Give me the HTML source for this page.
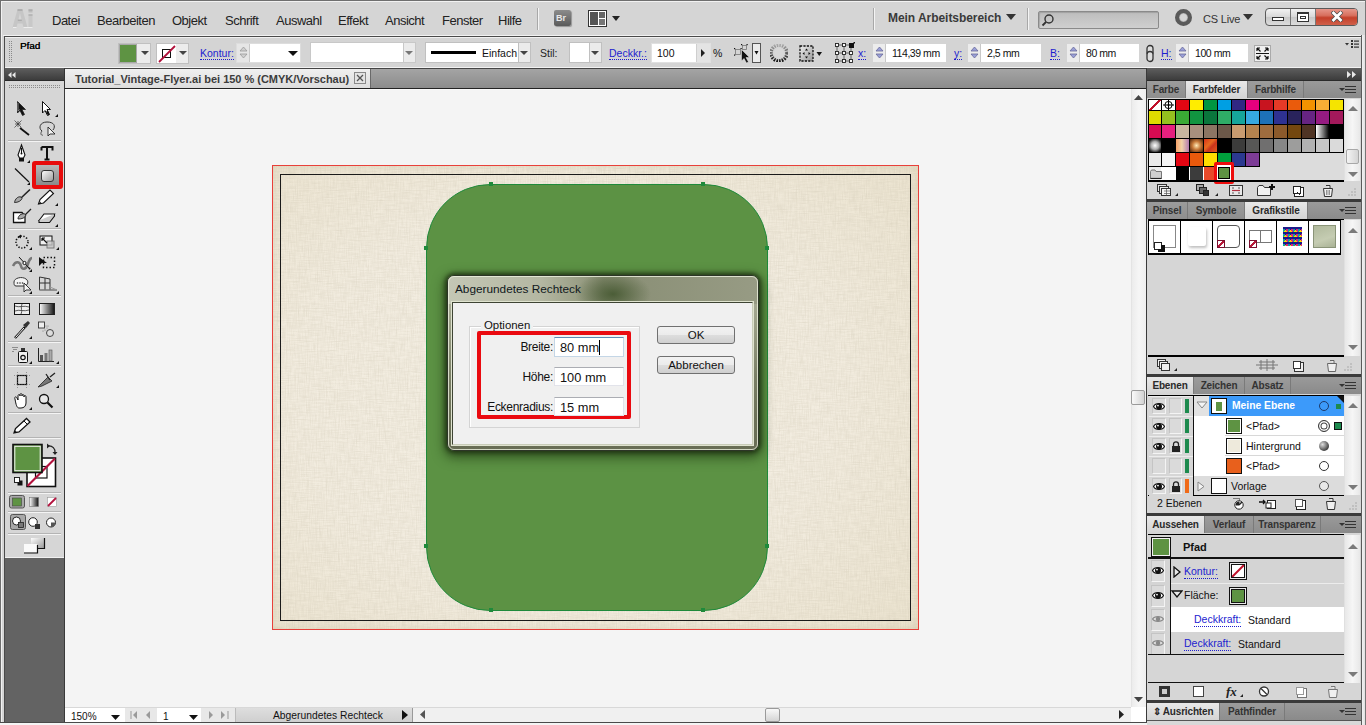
<!DOCTYPE html>
<html><head><meta charset="utf-8">
<style>
*{box-sizing:border-box}
html,body{margin:0;padding:0}
body{width:1366px;height:725px;position:relative;overflow:hidden;background:#d5d5d5;font-family:"Liberation Sans",sans-serif;color:#111}
.a{position:absolute}
.menu span{position:absolute;top:14px;font-size:13px;line-height:14px;color:#222;letter-spacing:-0.5px}
.hdr{background:linear-gradient(#5e5e5e,#3c3c3c);border-bottom:1px solid #2a2a2a}
.tab{position:absolute;top:0;height:17px;font-size:10px;font-weight:bold;color:#333;text-align:center;line-height:18px;white-space:nowrap;letter-spacing:-0.15px;background:linear-gradient(#9c9c9c,#8e8e8e);border-right:1px solid #7a7a7a}
.tab.on{background:linear-gradient(#e8e8e8,#d4d4d4);color:#2a2a2a}
.tabrow{background:linear-gradient(#9a9a9a,#8a8a8a)}
.inp{position:absolute;background:#fff;border:1px solid #b8b8b8}
.lbl{position:absolute;font-size:11px;color:#222}
.blue{color:#1d1dcf;border-bottom:1px dotted #1d1dcf;line-height:11px}
.sb{background:linear-gradient(90deg,#e8e8e8,#f6f6f6 50%,#e8e8e8);border-left:1px solid #e0e0e0}
.arrU{position:absolute;width:0;height:0;border-left:5px solid transparent;border-right:5px solid transparent;border-bottom:5px solid #7a7a7a}
.arrD{position:absolute;width:0;height:0;border-left:5px solid transparent;border-right:5px solid transparent;border-top:5px solid #7a7a7a}
.pm{position:absolute;top:5px;width:18px;height:9px;background:linear-gradient(#333 0 1px,transparent 1px 3px,#333 3px 4px,transparent 4px 6px,#333 6px 7px,transparent 7px) 7px 0/11px 9px no-repeat}
.pm:before{content:"";position:absolute;left:1px;top:2px;border-left:3px solid transparent;border-right:3px solid transparent;border-top:3px solid #333}
</style></head><body>

<!-- window frame -->
<div class="a" style="left:0;top:0;width:1366px;height:1px;background:#6f6f6f"></div>
<div class="a" style="left:0;top:0;width:1px;height:725px;background:#6f6f6f"></div>
<div class="a" style="left:1px;top:1px;width:1365px;height:1px;background:#f2f2f2"></div>
<div class="a" style="left:1px;top:1px;width:1px;height:724px;background:#f2f2f2"></div>

<!-- MENU BAR -->
<div class="menu">
 <svg class="a" style="left:12px;top:8px" width="21" height="20" viewBox="0 0 21 20">
 <path d="M0.5 19.5L5.5 1.5H10.5L15.5 19.5H11.5L10.5 15.5H5.5L4.5 19.5Z M6.3 12H9.7L8 5Z" fill="#c6c6c6" fill-rule="evenodd"/>
 <path d="M5.5 2H10.5" stroke="#a4a4a4" stroke-width="1.4"/><path d="M5.8 12.2H9.8" stroke="#a8a8a8" stroke-width="1.2"/>
 <rect x="16.5" y="6.5" width="4" height="13" fill="#c8c8c8"/><rect x="16.5" y="1.5" width="4" height="3" fill="#bdbdbd"/>
 <path d="M16.5 2H20.5M16.5 7H20.5" stroke="#a4a4a4" stroke-width="1.2"/>
 <path d="M1 19.5H4.5M11.5 19.5H20.5" stroke="#ececec" stroke-width="1"/>
</svg>
 <span style="left:52px">Datei</span>
 <span style="left:97px">Bearbeiten</span>
 <span style="left:172px">Objekt</span>
 <span style="left:225px">Schrift</span>
 <span style="left:276px">Auswahl</span>
 <span style="left:338px">Effekt</span>
 <span style="left:385px">Ansicht</span>
 <span style="left:442px">Fenster</span>
 <span style="left:498px">Hilfe</span>

 <div class="a" style="left:537px;top:8px;width:1px;height:22px;background:#a8a8a8;box-shadow:1px 0 0 #f4f4f4"></div>
 <div class="a" style="left:554px;top:10px;width:17px;height:16px;border-radius:2px;background:linear-gradient(#8c8c8c,#5a5a5a);box-shadow:1px 1px 1px rgba(0,0,0,.3)"></div>
 <div class="a" style="left:556px;top:13px;font-size:9px;font-weight:bold;line-height:10px;color:#e8e8e8">Br</div>
 <svg class="a" style="left:588px;top:10px" width="34" height="17" viewBox="0 0 34 17"><rect x=".5" y=".5" width="18" height="16" fill="#fff" stroke="#333"/><rect x="2" y="2" width="8" height="13" fill="#555"/><rect x="11" y="2" width="6" height="6" fill="#666"/><rect x="11" y="9" width="6" height="6" fill="#777"/><path d="M24 6H32L28 11Z" fill="#222"/></svg>
 <div class="a" style="left:873px;top:8px;width:1px;height:22px;background:#a8a8a8;box-shadow:1px 0 0 #f4f4f4"></div>
 <div class="a" style="left:888px;top:11px;font-size:12px;font-weight:bold;line-height:14px;color:#3a3a3a;letter-spacing:-0.05px">Mein Arbeitsbereich</div>
 <svg class="a" style="left:1006px;top:14px" width="10" height="7"><path d="M0 0H10L5 6Z" fill="#333"/></svg>
 <div class="a" style="left:1027px;top:8px;width:1px;height:22px;background:#a8a8a8;box-shadow:1px 0 0 #f4f4f4"></div>
 <div class="a" style="left:1038px;top:11px;width:121px;height:18px;border:1px solid #8a8a8a;border-radius:2px;background:linear-gradient(#bdbdbd,#cfcfcf);box-shadow:inset 1px 1px 1px rgba(0,0,0,.15)"></div>
 <svg class="a" style="left:1041px;top:13px" width="14" height="14" viewBox="0 0 14 14"><circle cx="8" cy="6" r="4" fill="none" stroke="#333" stroke-width="1.4"/><path d="M5 9L1.5 12.5" stroke="#333" stroke-width="1.8"/></svg>
 <div class="a" style="left:1175px;top:9px;width:17px;height:17px;border-radius:50%;border:4px solid #5a5a5a;box-shadow:inset 0 0 1px #000"></div>
 <div class="a" style="left:1203px;top:12px;font-size:11px;line-height:14px;color:#333;letter-spacing:-0.2px">CS Live</div>
 <svg class="a" style="left:1243px;top:14px" width="10" height="7"><path d="M0 0H10L5 6Z" fill="#333"/></svg>
 <div class="a" style="left:1265px;top:8px;width:93px;height:18px;border:1px solid #5a5a5a;border-radius:4px;background:linear-gradient(#f2f2f2,#d8d8d8 50%,#c8c8c8 51%,#dcdcdc)"></div>
 <div class="a" style="left:1290px;top:9px;width:1px;height:16px;background:#777"></div>
 <div class="a" style="left:1315px;top:9px;width:1px;height:16px;background:#777"></div>
 <div class="a" style="left:1316px;top:9px;width:41px;height:16px;border-radius:0 3px 3px 0;background:linear-gradient(#e6968a,#d8705e 40%,#c4402a 55%,#d0604a)"></div>
 <div class="a" style="left:1272px;top:17px;width:12px;height:4px;border:1px solid #333;background:#fff"></div>
 <div class="a" style="left:1297px;top:12px;width:12px;height:10px;border:1px solid #333;border-top-width:2px;background:#fff;box-shadow:inset 0 0 0 2px #fff,inset 0 0 0 3px #333"></div>
 <svg class="a" style="left:1331px;top:11px" width="12" height="11" viewBox="0 0 12 11"><path d="M2.5 2L9.5 9M9.5 2L2.5 9" stroke="#4a4a4a" stroke-width="4.2" stroke-linecap="square"/><path d="M2.5 2L9.5 9M9.5 2L2.5 9" stroke="#fff" stroke-width="2.8" stroke-linecap="square"/></svg>
</div>


<!-- CONTROL BAR -->
<div class="a" style="left:3px;top:35px;width:1359px;height:1px;background:#f2f2f2"></div>
<div class="a" style="left:4px;top:36px;width:1358px;height:33px;border-top:1px solid #4a4a4a;border-left:1px solid #4a4a4a;background:#d4d4d4"></div>


<!-- CONTROL BAR CONTENT -->
<div class="a" style="left:5px;top:37px;width:1356px;height:1px;background:#f0f0f0"></div>
<div class="a" style="left:5px;top:67px;width:1356px;height:1px;background:#f2f2f2"></div>
<svg class="a" style="left:9px;top:41px" width="3" height="22"><defs><pattern id="dp2" width="2" height="2" patternUnits="userSpaceOnUse"><rect width="1" height="1" fill="#8a8a8a"/></pattern></defs><rect width="3" height="22" fill="url(#dp2)"/></svg>
<div class="a" style="left:20px;top:39px;font-size:9.8px;line-height:13px;color:#000;text-shadow:0.3px 0 0 #000">Pfad</div>
<!-- fill -->
<div class="a" style="left:118px;top:43px;width:33px;height:21px;background:#ececec;border:1px solid #c0c0c0"></div>
<div class="a" style="left:119px;top:44px;width:18px;height:19px;background:#5e9343;border:1px solid #a8a8a8"></div>
<div class="a arrD" style="left:141px;top:51px;border-left-width:4px;border-right-width:4px;border-top-width:4px;border-top-color:#444"></div>
<!-- stroke -->
<div class="a" style="left:156px;top:43px;width:33px;height:21px;background:#ececec;border:1px solid #c0c0c0"></div>
<div class="a" style="left:157px;top:44px;width:19px;height:19px;background:#fff"></div>
<svg class="a" style="left:157px;top:44px" width="19" height="19"><rect x="5.5" y="5.5" width="8" height="8" fill="none" stroke="#111"/><path d="M2 18L18 2" stroke="#b0103a" stroke-width="1.8"/></svg>
<div class="a arrD" style="left:179px;top:51px;border-left-width:4px;border-right-width:4px;border-top-width:4px;border-top-color:#444"></div>
<div class="a blue" style="left:200px;top:47px;font-size:10.5px;line-height:12px">Kontur:</div>
<div class="inp" style="left:236px;top:43px;width:65px;height:20px;border-color:#ddd"></div>
<div class="a" style="left:237px;top:44px;width:13px;height:18px;background:#e6e6e6;border-right:1px solid #c8c8c8"></div>
<svg class="a" style="left:239px;top:46px" width="9" height="14"><path d="M1 5L4.5 1L8 5Z M1 8L4.5 12L8 8Z" fill="#d0d0d0" stroke="#9a9a9a" stroke-width=".8"/></svg>
<div class="a arrD" style="left:288px;top:51px;border-left-width:5px;border-right-width:5px;border-top-width:5px;border-top-color:#111"></div>
<!-- profile -->
<div class="inp" style="left:310px;top:42px;width:106px;height:21px;border-color:#c8c8c8"></div>
<div class="a" style="left:403px;top:43px;width:12px;height:19px;background:#ebebeb;border-left:1px solid #c8c8c8"></div>
<div class="a arrD" style="left:405px;top:51px;border-left-width:4px;border-right-width:4px;border-top-width:4px;border-top-color:#777"></div>
<!-- brush -->
<div class="inp" style="left:425px;top:42px;width:106px;height:21px;border-color:#c0c0c0"></div>
<div class="a" style="left:431px;top:51px;width:45px;height:3px;background:#000"></div>
<div class="a" style="left:482px;top:47px;font-size:10.5px;line-height:12px;color:#111">Einfach</div>
<div class="a" style="left:518px;top:43px;width:12px;height:19px;background:#ebebeb;border-left:1px solid #c0c0c0"></div>
<div class="a arrD" style="left:520px;top:51px;border-left-width:4px;border-right-width:4px;border-top-width:4px;border-top-color:#444"></div>
<div class="a" style="left:540px;top:47px;font-size:10.5px;line-height:12px;color:#222">Stil:</div>
<div class="inp" style="left:569px;top:42px;width:33px;height:21px;border-color:#c0c0c0"></div>
<div class="a" style="left:589px;top:43px;width:12px;height:19px;background:#ebebeb;border-left:1px solid #c0c0c0"></div>
<div class="a arrD" style="left:591px;top:51px;border-left-width:4px;border-right-width:4px;border-top-width:4px;border-top-color:#444"></div>
<div class="a blue" style="left:609px;top:47px;font-size:10.5px;line-height:12px">Deckkr.:</div>
<div class="inp" style="left:651px;top:43px;width:60px;height:20px;border-color:#e0e0e0"></div>
<div class="a" style="left:657px;top:47px;font-size:10.5px;line-height:12px;color:#111">100</div>
<div class="a" style="left:696px;top:44px;width:14px;height:18px;background:#e4e4e4;border-left:1px solid #cfcfcf"></div>
<svg class="a" style="left:701px;top:49px" width="5" height="8"><path d="M0 0L4 4L0 8Z" fill="#222"/></svg>
<div class="a" style="left:713px;top:47px;font-size:10.5px;line-height:12px;color:#111">%</div>
<svg class="a" style="left:733px;top:42px" width="30" height="23" viewBox="0 0 30 23">
 <g fill="none" stroke="#777" stroke-width=".8"><rect x="2.5" y="7.5" width="5" height="5"/><rect x="9.5" y="3.5" width="4" height="4"/></g>
 <g fill="#111"><rect x="1" y="6" width="1.2" height="1.2"/><rect x="7.5" y="6" width="1.2" height="1.2"/><rect x="1" y="12.5" width="1.2" height="1.2"/><rect x="8" y="2" width="1.2" height="1.2"/><rect x="13.5" y="2" width="1.2" height="1.2"/></g>
 <path d="M8.5 7.5L8.5 19L11 16.5L13.5 21L15.5 20L13 15.5H16.5Z" fill="#111" stroke="#eee" stroke-width=".5"/>
 <rect x="19.5" y="1.5" width="8" height="19" fill="#ececec" stroke="#555"/><path d="M21.5 9H25.5L23.5 12.5Z" fill="#111"/>
</svg>
<svg class="a" style="left:770px;top:44px" width="18" height="18" viewBox="0 0 18 18">
 <defs><radialGradient id="rc" cx=".5" cy=".5" r=".5"><stop offset=".35" stop-color="#e0e0e0"/><stop offset=".6" stop-color="#888"/><stop offset="1" stop-color="#d4d4d4" stop-opacity="0"/></radialGradient>
 <linearGradient id="rcl" x1="0" y1="0" x2="0" y2="1"><stop offset="0" stop-color="#aaa"/><stop offset="1" stop-color="#111"/></linearGradient></defs>
 <circle cx="9" cy="9" r="8" fill="none" stroke="url(#rcl)" stroke-width="3.5" stroke-dasharray="1.6 1.1"/>
 <circle cx="9" cy="9" r="5" fill="#d8d8d8"/>
</svg>
<svg class="a" style="left:798px;top:44px" width="26" height="19" viewBox="0 0 26 19">
 <defs><linearGradient id="al" x1="0" y1="0" x2="1" y2="1"><stop offset="0" stop-color="#eee"/><stop offset="1" stop-color="#999"/></linearGradient></defs>
 <rect x="2" y="2" width="13" height="15" fill="url(#al)" stroke="#111" stroke-width="1.3" stroke-dasharray="2.2 1.2"/>
 <path d="M8.5 4.5L7 6.5H10Z M8.5 14.5L7 12.5H10Z M4.5 9.5L6.5 8V11Z M12.5 9.5L10.5 8V11Z" fill="#111"/>
 <path d="M18.5 8H24L21.25 12Z" fill="#111"/>
</svg>
<svg class="a" style="left:834px;top:42px" width="22" height="22" viewBox="0 0 22 22">
 <path d="M3 3V19H17V3H3M3 11H17M10 3V19" fill="none" stroke="#444" stroke-width=".8"/>
 <g fill="#fafafa" stroke="#222" stroke-width=".9">
 <rect x="1.5" y="1.5" width="3" height="3"/><rect x="8.5" y="1.5" width="3" height="3"/>
 <rect x="1.5" y="9.5" width="3" height="3"/><rect x="8.5" y="9.5" width="3" height="3"/><rect x="15.5" y="9.5" width="3" height="3"/>
 <rect x="1.5" y="17.5" width="3" height="3"/><rect x="8.5" y="17.5" width="3" height="3"/><rect x="15.5" y="17.5" width="3" height="3"/>
 </g>
 <rect x="15" y="1" width="5" height="5" fill="#111"/><path d="M19 0H21V2Z" fill="#111"/>
</svg>
<div class="a blue" style="left:858px;top:47px;font-size:10.5px;line-height:12px">x:</div>
<div class="inp" style="left:872px;top:43px;width:75px;height:20px;border-color:#d4d4d4"></div>
<div class="a blue" style="left:954px;top:47px;font-size:10.5px;line-height:12px">y:</div>
<div class="inp" style="left:967px;top:43px;width:75px;height:20px;border-color:#d4d4d4"></div>
<div class="a blue" style="left:1050px;top:47px;font-size:10.5px;line-height:12px">B:</div>
<div class="inp" style="left:1066px;top:43px;width:74px;height:20px;border-color:#d4d4d4"></div>
<div class="a blue" style="left:1161px;top:47px;font-size:10.5px;line-height:12px">H:</div>
<div class="inp" style="left:1175px;top:43px;width:74px;height:20px;border-color:#d4d4d4"></div>
<div class="a" style="left:873px;top:44px;width:13px;height:18px;background:#ececec;border-right:1px solid #c8c8c8"></div>
<svg class="a" style="left:875px;top:46px" width="9" height="14"><path d="M1 5L4.5 1L8 5Z M1 8L4.5 12L8 8Z" fill="#9aa0d8" stroke="#6a6a9a" stroke-width=".8"/></svg>
<div class="a" style="left:968px;top:44px;width:13px;height:18px;background:#ececec;border-right:1px solid #c8c8c8"></div>
<svg class="a" style="left:970px;top:46px" width="9" height="14"><path d="M1 5L4.5 1L8 5Z M1 8L4.5 12L8 8Z" fill="#9aa0d8" stroke="#6a6a9a" stroke-width=".8"/></svg>
<div class="a" style="left:1067px;top:44px;width:13px;height:18px;background:#ececec;border-right:1px solid #c8c8c8"></div>
<svg class="a" style="left:1069px;top:46px" width="9" height="14"><path d="M1 5L4.5 1L8 5Z M1 8L4.5 12L8 8Z" fill="#9aa0d8" stroke="#6a6a9a" stroke-width=".8"/></svg>
<div class="a" style="left:1176px;top:44px;width:13px;height:18px;background:#ececec;border-right:1px solid #c8c8c8"></div>
<svg class="a" style="left:1178px;top:46px" width="9" height="14"><path d="M1 5L4.5 1L8 5Z M1 8L4.5 12L8 8Z" fill="#9aa0d8" stroke="#6a6a9a" stroke-width=".8"/></svg>

<div class="a" style="left:892px;top:47px;font-size:10.5px;line-height:12px;color:#111;letter-spacing:-0.45px">114,39 mm</div>
<div class="a" style="left:987px;top:47px;font-size:10.5px;line-height:12px;color:#111;letter-spacing:-0.45px">2,5 mm</div>
<div class="a" style="left:1086px;top:47px;font-size:10.5px;line-height:12px;color:#111;letter-spacing:-0.45px">80 mm</div>
<div class="a" style="left:1195px;top:47px;font-size:10.5px;line-height:12px;color:#111;letter-spacing:-0.45px">100 mm</div>
<svg class="a" style="left:1145px;top:44px" width="10" height="19" viewBox="0 0 10 19"><rect x="2" y="1.5" width="6" height="10" rx="3" fill="#ddd" stroke="#333" stroke-width="1.3"/><rect x="2" y="7.5" width="6" height="10" rx="3" fill="#ddd" stroke="#333" stroke-width="1.3"/></svg>
<svg class="a" style="left:1254px;top:45px" width="17" height="17" viewBox="0 0 17 17"><rect x=".5" y=".5" width="16" height="16" fill="#f0f0f0" stroke="#aaa"/><path d="M3 3L6.5 6.5M3 3H6M3 3V6 M14 3L10.5 6.5M14 3H11M14 3V6 M3 14L6.5 10.5M3 14H6M3 14V11 M14 14L10.5 10.5M14 14H11M14 14V11 M2 8.5H15" stroke="#111" stroke-width="1.2" fill="none"/></svg>
<svg class="a" style="left:1345px;top:39px" width="15" height="10" viewBox="0 0 15 10"><path d="M0 4H4L2 6.5Z" fill="#333"/><g fill="#333"><rect x="6" y="1" width="2" height="2"/><rect x="6" y="4" width="2" height="2"/><rect x="6" y="7" width="2" height="2"/><rect x="9" y="1.5" width="5" height="1.2"/><rect x="9" y="4.5" width="5" height="1.2"/><rect x="9" y="7.5" width="5" height="1.2"/></g></svg>

<!-- TOOLS PANEL -->
<div class="a hdr" style="left:5px;top:68px;width:59px;height:13px"></div>
<div class="a" style="left:5px;top:81px;width:59px;height:476px;background:#d6d6d6"></div>
<div class="a" style="left:5px;top:557px;width:59px;height:165px;background:#636363"></div>


<!-- TOOLS CONTENT -->
<svg class="a" style="left:8px;top:72px" width="8" height="6" viewBox="0 0 8 6"><path d="M3.5 0L0 3L3.5 6Z M7.5 0L4 3L7.5 6Z" fill="#e8e8e8"/></svg>
<svg class="a" style="left:9px;top:85px" width="52" height="3"><defs><pattern id="dp" width="2" height="2" patternUnits="userSpaceOnUse"><rect width="1" height="1" fill="#8a8a8a"/></pattern></defs><rect width="52" height="3" fill="url(#dp)"/></svg>
<svg class="a" style="left:0;top:0" width="66" height="560" viewBox="0 0 66 560">
 <defs>
  <linearGradient id="gw" x1="0" y1="0" x2="1" y2="1"><stop offset="0" stop-color="#fff"/><stop offset="1" stop-color="#9a9a9a"/></linearGradient>
  <linearGradient id="gh" x1="0" y1="0" x2="1" y2="0"><stop offset="0" stop-color="#fff"/><stop offset="1" stop-color="#111"/></linearGradient>
  <linearGradient id="gp" x1="0" y1="0" x2="0" y2="1"><stop offset="0" stop-color="#b8b8b8"/><stop offset="1" stop-color="#8a8a8a"/></linearGradient>
 </defs>
 <!-- separators -->
 <g fill="#b4b4b4"><rect x="8" y="140" width="53" height="1"/><rect x="8" y="228" width="53" height="1"/><rect x="8" y="295" width="53" height="1"/><rect x="8" y="341" width="53" height="1"/><rect x="8" y="365" width="53" height="1"/><rect x="8" y="412" width="53" height="1"/><rect x="8" y="437" width="53" height="1"/><rect x="8" y="492" width="53" height="1"/><rect x="8" y="511" width="53" height="1"/><rect x="8" y="533" width="53" height="1"/></g>
 <g fill="#f4f4f4"><rect x="8" y="141" width="53" height="1"/><rect x="8" y="229" width="53" height="1"/><rect x="8" y="296" width="53" height="1"/><rect x="8" y="342" width="53" height="1"/><rect x="8" y="366" width="53" height="1"/><rect x="8" y="413" width="53" height="1"/><rect x="8" y="438" width="53" height="1"/><rect x="8" y="493" width="53" height="1"/><rect x="8" y="512" width="53" height="1"/><rect x="8" y="534" width="53" height="1"/></g>
 <!-- small corner triangles -->
 <g fill="#111"><path d="M55 117L58 114V117Z M27 163L30 160V163Z M27 185L30 182V185Z M55 206L58 203V206Z M55 227L58 224V227Z M29 250L32 247V250Z M56 250L59 247V250Z M29 272L32 269V272Z M29 294L32 291V294Z M56 294L59 291V294Z M29 339L32 336V339Z M29 364L32 361V364Z M56 364L59 361V364Z M56 388L59 385V388Z M29 410L32 407V410Z"/></g>
 <!-- selection -->
 <path d="M17.5 101.5V113L20 110.5L22.5 115.5L24.5 114.5L22 109.5H25.5Z" fill="#111" stroke="#222" stroke-width=".8"/>
 <path d="M18 103V111L19.5 109.5" fill="none" stroke="#888" stroke-width="1"/>
 <path d="M42.5 101.5V113L45 110.5L47.5 115.5L49.5 114.5L47 109.5H50.5Z" fill="#fff" stroke="#111" stroke-width="1"/>
 <path d="M46 112L48 115.5L49.5 114.5L47.5 110Z" fill="#111"/>
 <!-- magic wand -->
 <path d="M20 128L29 135" stroke="#111" stroke-width="1.8"/>
 <path d="M18 121V127M15 124H21M14.5 120.5L21.5 127.5M21.5 120.5L14.5 127.5" stroke="#333" stroke-width=".7"/>
 <!-- lasso -->
 <path d="M42 131C38 128 40 122 47 122C54 122 56 126 53 130" fill="none" stroke="#333" stroke-width="1"/>
 <path d="M42 131C40 133 41 136 43 135" fill="none" stroke="#333" stroke-width=".8"/>
 <path d="M48 127V136L50 134L55 134Z" fill="#f4f4f4" stroke="#222" stroke-width=".9"/>
 <!-- pen -->
 <path d="M21.5 145L18 155L19.5 158H23.5L25 155Z" fill="#fff" stroke="#111" stroke-width="1.1"/>
 <path d="M21.5 148V153" stroke="#111"/><circle cx="21.5" cy="153.5" r="1" fill="#111"/>
 <rect x="19" y="158" width="5" height="3.5" fill="#111"/>
 <!-- type T -->
 <path d="M41.5 147H52.5V150.5M41.5 147V150.5M47 147V159.5M44.5 159.5H49.5" stroke="#111" stroke-width="2" fill="none"/>
 <!-- red highlight rounded rect tool -->
 <rect x="34" y="163" width="27" height="24" fill="none" stroke="#e80c0c" stroke-width="4" rx="1"/>
 <rect x="36" y="165" width="23" height="20" fill="url(#gp)"/>
 <rect x="41.5" y="170.5" width="12" height="11" rx="2.5" fill="url(#gw)" stroke="#333" stroke-width="1"/>
 <!-- line -->
 <path d="M15 168.5L29 182" stroke="#111" stroke-width="1.2"/>
 <!-- brush -->
 <path d="M30 189.5L21 198" stroke="#222" stroke-width="1.6"/>
 <path d="M21 197C18 196 15 199 14.5 202.5C18 202.5 21 201 22 198.5Z" fill="#aaa" stroke="#222" stroke-width=".9"/>
 <!-- pencil -->
 <path d="M38.5 204L40 199.5L50 190L53.5 193.5L43.5 203Z" fill="#fff" stroke="#111" stroke-width="1.1"/>
 <path d="M38.5 204L40.5 201.5L41 203.2Z" fill="#111"/>
 <!-- blob brush -->
 <path d="M13.5 212.5H22L25 216V222.5H13.5Z" fill="#fff" stroke="#111" stroke-width="1.3"/>
 <path d="M31 209L25 215" stroke="#222" stroke-width="1.3"/>
 <path d="M25 214C21 213 18 216 18 219C22 219 25 218 26 215Z" fill="#aaa" stroke="#222" stroke-width=".9"/>
 <!-- eraser -->
 <path d="M39 220.5L44 214H54.5L49.5 220.5Z" fill="#fff" stroke="#111" stroke-width="1.1"/>
 <path d="M39 220.5V222.5H49.5L54.5 216V214" fill="#ccc" stroke="#111" stroke-width="1.1"/>
 <!-- rotate -->
 <circle cx="22" cy="242" r="6" fill="none" stroke="#111" stroke-width="1.6" stroke-dasharray="1.3 1.6"/>
 <path d="M18 236.5L21 234.5L21 238.5Z" fill="#111"/>
 <!-- scale -->
 <rect x="40" y="236" width="12" height="9" fill="#f0f0f0" stroke="#111" stroke-width="1"/>
 <rect x="47" y="241" width="7" height="7" fill="#c8c8c8" stroke="#666" stroke-width="1" opacity=".8"/>
 <path d="M42 238L47 243M42 238H45M42 238V241" stroke="#111" stroke-width="1.2" fill="none"/>
 <!-- warp -->
 <path d="M13 266C16 260 20 262 21 266C22 270 26 270 28 264C29 260 31 258 32 258" fill="none" stroke="#777" stroke-width="2.5"/>
 <path d="M19 257L29 268" stroke="#111" stroke-width="1"/><circle cx="24.5" cy="263" r="1.6" fill="#fff" stroke="#111"/>
 <circle cx="29.5" cy="268.5" r="1" fill="#111"/>
 <!-- free transform -->
 <rect x="43.5" y="257.5" width="11" height="10" fill="none" stroke="#111" stroke-width="1.5" stroke-dasharray="1.5 2"/>
 <path d="M39 257V266L42 263L47 263Z" fill="#111"/>
 <!-- shape builder -->
 <path d="M14 282C14 278 22 276 26 279C29 281 28 285 25 286H16C14 286 14 284 14 282Z" fill="#f4f4f4" stroke="#333" stroke-width="1"/>
 <g fill="#333"><circle cx="17.5" cy="283" r=".8"/><circle cx="20" cy="283" r=".8"/><circle cx="22.5" cy="283" r=".8"/></g>
 <path d="M24 283V292L26 290L31 290Z" fill="#f4f4f4" stroke="#222" stroke-width=".9"/>
 <!-- perspective grid -->
 <path d="M39.5 277V290H57M39.5 290L39.5 277L45 278V290M45 278L50 279V290M39.5 283H50" fill="none" stroke="#333" stroke-width="1"/>
 <path d="M39.5 290H57L50 287" fill="none" stroke="#999" stroke-width="1"/>
 <!-- mesh -->
 <rect x="14.5" y="303.5" width="15" height="11" fill="#eee" stroke="#111" stroke-width="1"/>
 <path d="M15 306C19 308 24 305 29 307M22 304C20 308 23 311 21 314M15 311C19 309 24 312 29 310" fill="none" stroke="#333" stroke-width=".8"/>
 <!-- gradient -->
 <rect x="39.5" y="303.5" width="15" height="11" fill="url(#gh)" stroke="#222" stroke-width="1"/>
 <!-- eyedropper -->
 <path d="M15 338L25 327" stroke="#111" stroke-width="2.5"/><path d="M15.5 337.5L24 328" stroke="#fff" stroke-width="1"/>
 <path d="M23 325L28 321L30 323L26 328Z" fill="#333"/>
 <!-- blend -->
 <rect x="38.5" y="322" width="6" height="6" fill="#eee" stroke="#333" stroke-width=".9"/>
 <g fill="#777"><circle cx="46" cy="326" r=".6"/><circle cx="48" cy="326" r=".6"/><circle cx="47" cy="328" r=".6"/><circle cx="45" cy="330" r=".6"/><circle cx="49" cy="330" r=".6"/><circle cx="43" cy="331" r=".6"/><circle cx="47" cy="332" r=".6"/></g>
 <circle cx="50" cy="333" r="3.5" fill="#ddd" stroke="#333" stroke-width=".9"/>
 <!-- symbol sprayer -->
 <rect x="18.5" y="351.5" width="9" height="11" rx="1" fill="#f0f0f0" stroke="#111" stroke-width="1"/>
 <rect x="21" y="348" width="4" height="3" fill="#333"/>
 <circle cx="23" cy="357.5" r="2.2" fill="none" stroke="#111" stroke-width="1.2"/>
 <g fill="#333"><circle cx="13" cy="347.5" r=".6"/><circle cx="15" cy="347.5" r=".6"/><circle cx="17" cy="347.5" r=".6"/><circle cx="14" cy="349.5" r=".6"/><circle cx="16" cy="349.5" r=".6"/><circle cx="13" cy="351.5" r=".6"/></g>
 <!-- graph -->
 <path d="M38.5 348V361.5H54" fill="none" stroke="#222" stroke-width="1"/>
 <rect x="40" y="355" width="3" height="6" fill="#555"/><rect x="44.5" y="353" width="3" height="8" fill="#777"/><rect x="49" y="350" width="3" height="11" fill="#aaa" stroke="#555" stroke-width=".6"/>
 <!-- artboard -->
 <rect x="17.5" y="375.5" width="9" height="9" fill="none" stroke="#111" stroke-width="1.2"/>
 <path d="M14 375.5H30M14 384.5H30M17.5 372V388M26.5 372V388" stroke="#666" stroke-width=".6" stroke-dasharray="1 1.5"/>
 <!-- slice -->
 <path d="M38 387L48 377L52 381L42 386Z" fill="#777" stroke="#222" stroke-width=".8"/>
 <path d="M46 374L50 380M50 377L55 373" stroke="#222" stroke-width="1.3"/>
 <!-- hand -->
 <path d="M15 399C14 397 16 396 17 398L18 400V396C18 394 20 394 20 396V395C20 393 22 393 22 395V396C22 394 24 394 24 396V397C24 395 26 395 26 397V403C26 406 24 408 21 408H19C17 408 16 405 15 399Z" fill="#fff" stroke="#111" stroke-width="1"/>
 <!-- zoom -->
 <circle cx="44" cy="399" r="4.5" fill="#e8e8e8" stroke="#111" stroke-width="1.3"/>
 <path d="M47.5 402.5L52.5 407.5" stroke="#111" stroke-width="2.2"/>
 <!-- big pencil -->
 <path d="M14 433L15.5 428.5L26.5 418.5L30 422L19 432Z" fill="#fff" stroke="#111" stroke-width="1.3"/>
 <path d="M14 433L15.8 430.6L16.6 432.2Z" fill="#111"/><path d="M24 421L27.5 424.5" stroke="#111"/>
 <!-- fill / stroke -->
 <rect x="27" y="458" width="28.5" height="28.5" fill="#fff" stroke="#111" stroke-width="1.6"/>
 <rect x="35.5" y="466.5" width="11.5" height="11.5" fill="#fff" stroke="#111" stroke-width="1.2"/>
 <path d="M27.5 486L55 458.5" stroke="#b3123e" stroke-width="2.2"/>
 <rect x="13" y="444.5" width="29" height="28" fill="#5e9343" stroke="#111" stroke-width="1.6"/>
 <rect x="14.8" y="446.3" width="25.4" height="24.4" fill="none" stroke="#f4f4f4" stroke-width="1"/>
 <rect x="17.5" y="480.5" width="5" height="5" fill="#111"/><rect x="14.5" y="477.5" width="5" height="5" fill="#fff" stroke="#111" stroke-width=".9"/>
 <path d="M48 446A6 6 0 0 1 55 453" fill="none" stroke="#222" stroke-width="1.3"/><path d="M47 443.5V448.5L50 446Z M52.5 452H57.5L55 455Z" fill="#222"/>
 <!-- color/gradient/none -->
 <rect x="9.5" y="495.5" width="15" height="12.5" rx="2" fill="#a8a8a8" stroke="#555" stroke-width="1"/>
 <rect x="12.5" y="498" width="9" height="8" fill="#5e9343" stroke="#444" stroke-width=".6"/>
 <rect x="29.5" y="497.5" width="9" height="9" fill="url(#gh)" stroke="#777" stroke-width=".6"/>
 <rect x="47.5" y="497.5" width="9" height="9" fill="#fff" stroke="#999" stroke-width=".6"/><path d="M48 506L56 498" stroke="#b3123e" stroke-width="1.8"/>
 <!-- draw modes -->
 <rect x="10.5" y="514.5" width="15" height="15" rx="2" fill="#a8a8a8" stroke="#555" stroke-width="1"/>
 <circle cx="16.5" cy="521" r="4" fill="#fff" stroke="#222" stroke-width="1"/><rect x="18.5" y="522.5" width="5" height="5" fill="#777" stroke="#222" stroke-width=".8"/>
 <circle cx="33" cy="522" r="4.3" fill="#fff" stroke="#222" stroke-width="1"/><rect x="35" y="524" width="5" height="5" fill="#333"/>
 <circle cx="51" cy="522.5" r="4.5" fill="#fff" stroke="#222" stroke-width="1"/><path d="M51 522.5H55.5A4.5 4.5 0 0 1 51 527Z" fill="#555"/>
 <!-- screen mode -->
 <rect x="31" y="538" width="13" height="10" fill="url(#gw)"/><path d="M44.5 538V548.5H32" fill="none" stroke="#111" stroke-width="1.2"/>
 <rect x="24" y="544" width="13" height="8.5" fill="#fafafa"/><path d="M37.5 545V553H24" fill="none" stroke="#111" stroke-width="1.2"/>
</svg>

<!-- DOC TAB BAR -->
<div class="a" style="left:4px;top:68px;width:1px;height:654px;background:#4a4a4a"></div>
<div class="a" style="left:64px;top:68px;width:1px;height:654px;background:#3a3a3a"></div>
<div class="a" style="left:5px;top:557px;width:59px;height:1px;background:#f0f0f0"></div>
<div class="a" style="left:64px;top:68px;width:1082px;height:21px;background:linear-gradient(#a4a4a4,#8c8c8c);border-top:1px solid #444;border-bottom:1px solid #222;border-left:1px solid #333"></div>

<!-- CANVAS -->
<div class="a" style="left:65px;top:89px;width:1066px;height:618px;background:#f4f4f4"></div>



<!-- DOC TAB -->
<div class="a" style="left:65px;top:69px;width:306px;height:20px;background:linear-gradient(#f0f0f0,#dcdcdc);border-right:1px solid #6a6a6a"></div>
<div class="a" style="left:75px;top:72px;font-size:11px;font-weight:bold;line-height:14px;color:#3c3c3c;letter-spacing:-0.02px;white-space:nowrap">Tutorial_Vintage-Flyer.ai bei 150 % (CMYK/Vorschau)</div>
<div class="a" style="left:354px;top:72px;width:12px;height:12px;border:1px solid #8a8a8a;background:#e4e4e4"></div>
<svg class="a" style="left:354px;top:72px" width="12" height="12"><path d="M3 3L9 9M9 3L3 9" stroke="#555" stroke-width="1.3"/></svg>
<div class="a" style="left:65px;top:88px;width:1081px;height:1px;background:#222"></div>
<div class="a" style="left:65px;top:89px;width:1066px;height:1px;background:#fafafa"></div>
<!-- scrollbars -->
<div class="a" style="left:1131px;top:89px;width:15px;height:618px;background:linear-gradient(90deg,#ececec,#f6f6f6 50%,#efefef);border-left:1px solid #e4e4e4"></div>
<svg class="a" style="left:1134px;top:95px" width="9" height="5"><path d="M0 5L4.5 0L9 5Z" fill="#444"/></svg>
<svg class="a" style="left:1134px;top:697px" width="9" height="5"><path d="M0 0L4.5 5L9 0Z" fill="#444"/></svg>
<div class="a" style="left:1131px;top:390px;width:14px;height:15px;border:1px solid #9a9a9a;border-radius:2px;background:linear-gradient(90deg,#fafafa,#d2d2d2)"></div>
<div class="a" style="left:65px;top:707px;width:1081px;height:15px;background:#f0f0f0;border-top:1px solid #d8d8d8"></div>
<div class="a" style="left:65px;top:707px;width:170px;height:15px;background:#fff;border-top:1px solid #d8d8d8"></div>
<div class="a" style="left:71px;top:711px;font-size:10px;line-height:12px;color:#111">150%</div>
<svg class="a" style="left:111px;top:715px" width="9" height="5"><path d="M0 0H9L4.5 5Z" fill="#111"/></svg>
<div class="a" style="left:125px;top:708px;width:32px;height:14px;background:#e8e8e8"></div>
<svg class="a" style="left:130px;top:710px" width="24" height="10"><path d="M1 1V9" stroke="#999"/><path d="M7 1L3 5L7 9Z M20 1L16 5L20 9Z" fill="#9a9a9a"/></svg>
<div class="a" style="left:158px;top:708px;width:43px;height:14px;background:#fff"></div>
<div class="a" style="left:163px;top:711px;font-size:10px;line-height:12px;color:#111">1</div>
<svg class="a" style="left:189px;top:715px" width="9" height="5"><path d="M0 0H9L4.5 5Z" fill="#111"/></svg>
<div class="a" style="left:201px;top:708px;width:34px;height:14px;background:#e8e8e8"></div>
<svg class="a" style="left:206px;top:710px" width="24" height="10"><path d="M3 1L7 5L3 9Z M15 1L19 5L15 9Z" fill="#9a9a9a"/><path d="M22 1V9" stroke="#999"/></svg>
<div class="a" style="left:235px;top:708px;width:178px;height:14px;background:linear-gradient(#dedede,#cfcfcf);border-left:1px solid #bbb;border-right:1px solid #999"></div>
<div class="a" style="left:273px;top:710px;font-size:10.3px;line-height:12px;color:#111;white-space:nowrap">Abgerundetes Rechteck</div>
<svg class="a" style="left:402px;top:710px" width="6" height="10"><path d="M0 0L6 5L0 10Z" fill="#111"/></svg>
<svg class="a" style="left:420px;top:710px" width="5" height="9"><path d="M5 0L0 4.5L5 9Z" fill="#555"/></svg>
<div class="a" style="left:765px;top:708px;width:15px;height:14px;border:1px solid #9a9a9a;border-radius:2px;background:linear-gradient(#f8f8f8,#d4d4d4)"></div>
<svg class="a" style="left:1119px;top:710px" width="5" height="9"><path d="M0 0L5 4.5L0 9Z" fill="#222"/></svg>
<div class="a" style="left:1131px;top:707px;width:15px;height:15px;background:#fff"></div>
<div class="a" style="left:0;top:722px;width:1366px;height:1px;background:#4a4a4a"></div>
<div class="a" style="left:0;top:723px;width:1366px;height:2px;background:#f4f4f4"></div>

<!-- ARTBOARD -->
<div class="a" style="left:272px;top:165px;width:647px;height:465px;border:1px solid #e8403a;box-shadow:inset 0 0 10px rgba(190,170,120,.28);background:radial-gradient(ellipse 75% 75% at 45% 50%,#f4efe3 0%,#f2ecdf 55%,#ebe3cf 100%)"></div>
<svg class="a" style="left:273px;top:166px" width="645" height="463">
 <defs>
  <filter id="lin" x="0" y="0" width="100%" height="100%">
   <feTurbulence type="fractalNoise" baseFrequency="0.9 0.08" numOctaves="2" seed="3" result="n1"/>
   <feTurbulence type="fractalNoise" baseFrequency="0.08 0.9" numOctaves="2" seed="7" result="n2"/>
   <feBlend in="n1" in2="n2" mode="multiply" result="n"/>
   <feColorMatrix in="n" type="matrix" values="0 0 0 0 0.55  0 0 0 0 0.50  0 0 0 0 0.38  -1.6 0 0 0 0.95"/>
  </filter>
 </defs>
 <rect width="645" height="463" filter="url(#lin)" opacity=".42"/>
</svg>
<div class="a" style="left:280px;top:174px;width:631px;height:447px;border:1px solid #1a1a1a"></div>
<!-- green rounded rect -->
<div class="a" style="left:426px;top:184px;width:342px;height:427px;border-radius:64px;background:#5c9244;border:1px solid #1f8a3b"></div>
<div class="a" style="left:489px;top:182px;width:4px;height:4px;background:#1f8a3b"></div>
<div class="a" style="left:701px;top:182px;width:4px;height:4px;background:#1f8a3b"></div>
<div class="a" style="left:424px;top:246px;width:4px;height:4px;background:#1f8a3b"></div>
<div class="a" style="left:765px;top:246px;width:4px;height:4px;background:#1f8a3b"></div>
<div class="a" style="left:424px;top:544px;width:4px;height:4px;background:#1f8a3b"></div>
<div class="a" style="left:765px;top:544px;width:4px;height:4px;background:#1f8a3b"></div>
<div class="a" style="left:489px;top:608px;width:4px;height:4px;background:#1f8a3b"></div>
<div class="a" style="left:701px;top:608px;width:4px;height:4px;background:#1f8a3b"></div>

<!-- DIALOG -->
<div class="a" style="left:447px;top:275px;width:312px;height:176px;border-radius:7px;box-shadow:0 0 4px 2px rgba(25,40,15,.75),0 4px 12px 3px rgba(20,40,10,.55);background:radial-gradient(ellipse 38px 22px at 165px 18px,rgba(65,85,45,.85),rgba(65,85,45,0)) 0 0/100% 40px no-repeat,linear-gradient(90deg,#c4c7b5 0%,#b4b7a2 30%,#9a9f86 42%,#858b70 50%,#8c9178 62%,#979b84 100%) 0 0/100% 28px no-repeat,linear-gradient(180deg,#b0b39e 0,#a4a892 28px,#9a9e86 50px,#7a7f66 100px,#6c7158 140px,#686d55 100%);border:1px solid #2c3526"></div>
<div class="a" style="left:448px;top:276px;width:310px;height:174px;border-radius:6px;border:1px solid rgba(238,242,224,.8)"></div>
<div class="a" style="left:452px;top:302px;width:301px;height:143px;background:#f0f0f0;border:1px solid #3e4434;border-right-color:#c8ccb8;border-bottom-color:#c8ccb8;box-shadow:0 0 0 1px #dfe3cf"></div>
<div class="a" style="left:455px;top:283px;font-size:11.8px;line-height:12px;color:#101820">Abgerundetes Rechteck</div>
<div class="a" style="left:469px;top:326px;width:171px;height:102px;border:1px solid #d4d4d4;box-shadow:inset 1px 1px 0 #fff"></div>
<div class="a" style="left:481px;top:319px;padding:0 3px;background:#f0f0f0;font-size:11.4px;line-height:12px;color:#111">Optionen</div>
<div class="a" style="left:477px;top:331px;width:154px;height:88px;border:4px solid #ea0a10;border-radius:2px"></div>
<div class="a" style="left:470px;top:341px;width:83px;text-align:right;font-size:12px;line-height:12px;color:#111;letter-spacing:-0.3px">Breite:</div>
<div class="a" style="left:470px;top:371px;width:83px;text-align:right;font-size:12px;line-height:12px;color:#111;letter-spacing:-0.3px">H&ouml;he:</div>
<div class="a" style="left:470px;top:401px;width:83px;text-align:right;font-size:12px;line-height:12px;color:#111;letter-spacing:-0.3px">Eckenradius:</div>
<div class="a" style="left:554px;top:337px;width:70px;height:20px;background:#fff;border:1px solid #c4d6e6;border-top-color:#5c8bb5"></div>
<div class="a" style="left:554px;top:367px;width:70px;height:19px;background:#fff;border:1px solid #e2e3ea;border-top-color:#abadb3"></div>
<div class="a" style="left:554px;top:397px;width:70px;height:19px;background:#fff;border:1px solid #e2e3ea;border-top-color:#abadb3"></div>
<div class="a" style="left:560px;top:342px;font-size:12.8px;line-height:12px;color:#111">80 mm</div>
<div class="a" style="left:599px;top:340px;width:1px;height:15px;background:#000"></div>
<div class="a" style="left:560px;top:372px;font-size:12.8px;line-height:12px;color:#111">100 mm</div>
<div class="a" style="left:560px;top:402px;font-size:12.8px;line-height:12px;color:#111">15 mm</div>
<div class="a" style="left:657px;top:326px;width:78px;height:18px;border:1px solid #707070;border-radius:3px;background:linear-gradient(#f2f2f2 0%,#ebebeb 50%,#dddddd 51%,#cfcfcf 100%);font-size:11.5px;line-height:16px;text-align:center;color:#111">OK</div>
<div class="a" style="left:657px;top:356px;width:78px;height:18px;border:1px solid #707070;border-radius:3px;background:linear-gradient(#f2f2f2 0%,#ebebeb 50%,#dddddd 51%,#cfcfcf 100%);font-size:11.5px;line-height:16px;text-align:center;color:#111">Abbrechen</div>

<!-- RIGHT PANELS -->
<div class="a" style="left:1146px;top:68px;width:1px;height:654px;background:#3a3a3a"></div>
<div class="a" style="left:1147px;top:68px;width:214px;height:654px;background:#d6d6d6"></div>
<div class="a" style="left:1361px;top:35px;width:1px;height:690px;background:#5a5a5a"></div>
<div class="a" style="left:1362px;top:35px;width:3px;height:690px;background:linear-gradient(90deg,#f2f2f2,#e0e0e0)"></div>
<div class="a" style="left:1365px;top:0;width:1px;height:725px;background:#777"></div>
<div class="a hdr" style="left:1147px;top:68px;width:214px;height:13px"></div>
<svg class="a" style="left:1347px;top:71px" width="10" height="7" viewBox="0 0 10 7"><path d="M0 0L4 3.5L0 7Z M5 0L9 3.5L5 7Z" fill="#e8e8e8"/></svg>

<!-- panel 1 tabs -->
<div class="a tabrow" style="left:1147px;top:81px;width:214px;height:17px">
 <div class="tab" style="left:0;width:39px">Farbe</div>
 <div class="tab on" style="left:39px;width:62px">Farbfelder</div>
 <div class="tab" style="left:101px;width:56px">Farbhilfe</div>
 <div class="pm" style="left:191px"></div>
</div>
<div class="a" style="left:1147px;top:98px;width:214px;height:101px;background:#d6d6d6"></div>
<div class="a" style="left:1148px;top:99px;width:196px;height:54px;background:#000"></div>
<div class="a" style="left:1148px;top:152px;width:112px;height:15px;background:#000"></div>
<div class="a" style="left:1149px;top:100px;width:12px;height:10px;background:#fff linear-gradient(135deg,transparent 0 44%,#c0102a 44% 58%,transparent 58%)"></div>
<div class="a" style="left:1162px;top:100px;width:13px;height:10px;background:#fff"></div>
<div class="a" style="left:1176px;top:100px;width:13px;height:10px;background:#e30613"></div>
<div class="a" style="left:1190px;top:100px;width:13px;height:10px;background:#ffed00"></div>
<div class="a" style="left:1204px;top:100px;width:13px;height:10px;background:#009641"></div>
<div class="a" style="left:1218px;top:100px;width:13px;height:10px;background:#009fe3"></div>
<div class="a" style="left:1232px;top:100px;width:13px;height:10px;background:#312783"></div>
<div class="a" style="left:1246px;top:100px;width:13px;height:10px;background:#e6007e"></div>
<div class="a" style="left:1260px;top:100px;width:13px;height:10px;background:#c8141f"></div>
<div class="a" style="left:1274px;top:100px;width:13px;height:10px;background:#e53a27"></div>
<div class="a" style="left:1288px;top:100px;width:13px;height:10px;background:#ea5b0c"></div>
<div class="a" style="left:1302px;top:100px;width:13px;height:10px;background:#f39200"></div>
<div class="a" style="left:1316px;top:100px;width:13px;height:10px;background:#f8ae35"></div>
<div class="a" style="left:1330px;top:100px;width:13px;height:10px;background:#f5e400"></div>
<div class="a" style="left:1149px;top:111px;width:12px;height:13px;background:#dedc00"></div>
<div class="a" style="left:1162px;top:111px;width:13px;height:13px;background:#95c11f"></div>
<div class="a" style="left:1176px;top:111px;width:13px;height:13px;background:#3aaa35"></div>
<div class="a" style="left:1190px;top:111px;width:13px;height:13px;background:#119440"></div>
<div class="a" style="left:1204px;top:111px;width:13px;height:13px;background:#0a763c"></div>
<div class="a" style="left:1218px;top:111px;width:13px;height:13px;background:#2fac66"></div>
<div class="a" style="left:1232px;top:111px;width:13px;height:13px;background:#16a59b"></div>
<div class="a" style="left:1246px;top:111px;width:13px;height:13px;background:#36a9e1"></div>
<div class="a" style="left:1260px;top:111px;width:13px;height:13px;background:#1d71b8"></div>
<div class="a" style="left:1274px;top:111px;width:13px;height:13px;background:#2e3192"></div>
<div class="a" style="left:1288px;top:111px;width:13px;height:13px;background:#29235c"></div>
<div class="a" style="left:1302px;top:111px;width:13px;height:13px;background:#662483"></div>
<div class="a" style="left:1316px;top:111px;width:13px;height:13px;background:#951b81"></div>
<div class="a" style="left:1330px;top:111px;width:13px;height:13px;background:#a3195b"></div>
<div class="a" style="left:1149px;top:125px;width:12px;height:13px;background:#d60b52"></div>
<div class="a" style="left:1162px;top:125px;width:13px;height:13px;background:#e6207e"></div>
<div class="a" style="left:1176px;top:125px;width:13px;height:13px;background:#c8b69f"></div>
<div class="a" style="left:1190px;top:125px;width:13px;height:13px;background:#a8907e"></div>
<div class="a" style="left:1204px;top:125px;width:13px;height:13px;background:#8c7563"></div>
<div class="a" style="left:1218px;top:125px;width:13px;height:13px;background:#6c5849"></div>
<div class="a" style="left:1232px;top:125px;width:13px;height:13px;background:#c99c70"></div>
<div class="a" style="left:1246px;top:125px;width:13px;height:13px;background:#b4834f"></div>
<div class="a" style="left:1260px;top:125px;width:13px;height:13px;background:#9e6c3e"></div>
<div class="a" style="left:1274px;top:125px;width:13px;height:13px;background:#8c5a2b"></div>
<div class="a" style="left:1288px;top:125px;width:13px;height:13px;background:#73470f"></div>
<div class="a" style="left:1302px;top:125px;width:13px;height:13px;background:#4f3424"></div>
<div class="a" style="left:1316px;top:125px;width:13px;height:13px;background:linear-gradient(90deg,#fff,#777 55%,#000)"></div>
<div class="a" style="left:1330px;top:125px;width:13px;height:13px;background:#000000"></div>
<div class="a" style="left:1149px;top:139px;width:12px;height:13px;background:radial-gradient(circle at 50% 50%,#fff 0,#aaa 45%,#222 80%,#000 100%)"></div>
<div class="a" style="left:1162px;top:139px;width:13px;height:13px;background:#000000"></div>
<div class="a" style="left:1176px;top:139px;width:13px;height:13px;background:linear-gradient(90deg,#f7a36a,#f2d2a8 45%,#b47bb0)"></div>
<div class="a" style="left:1190px;top:139px;width:13px;height:13px;background:radial-gradient(circle,#ffeab8 0,#c77a3a 45%,#4a1f08 100%)"></div>
<div class="a" style="left:1204px;top:139px;width:13px;height:13px;background:linear-gradient(135deg,#d8321a,#e86a20 40%,#c9331c 60%,#e25a1a)"></div>
<div class="a" style="left:1218px;top:139px;width:13px;height:13px;background:#000000"></div>
<div class="a" style="left:1232px;top:139px;width:13px;height:13px;background:#3c3c3b"></div>
<div class="a" style="left:1246px;top:139px;width:13px;height:13px;background:#575756"></div>
<div class="a" style="left:1260px;top:139px;width:13px;height:13px;background:#706f6f"></div>
<div class="a" style="left:1274px;top:139px;width:13px;height:13px;background:#878787"></div>
<div class="a" style="left:1288px;top:139px;width:13px;height:13px;background:#9d9d9c"></div>
<div class="a" style="left:1302px;top:139px;width:13px;height:13px;background:#b2b2b2"></div>
<div class="a" style="left:1316px;top:139px;width:13px;height:13px;background:#c6c6c6"></div>
<div class="a" style="left:1330px;top:139px;width:13px;height:13px;background:#dadada"></div>
<div class="a" style="left:1149px;top:153px;width:12px;height:13px;background:#eaeaea"></div>
<div class="a" style="left:1162px;top:153px;width:13px;height:13px;background:#f4f4f4"></div>
<div class="a" style="left:1176px;top:153px;width:13px;height:13px;background:#e30613"></div>
<div class="a" style="left:1190px;top:153px;width:13px;height:13px;background:#ea5a0c"></div>
<div class="a" style="left:1204px;top:153px;width:13px;height:13px;background:#ffdd00"></div>
<div class="a" style="left:1218px;top:153px;width:13px;height:13px;background:#00a03c"></div>
<div class="a" style="left:1232px;top:153px;width:13px;height:13px;background:#2b3990"></div>
<div class="a" style="left:1246px;top:153px;width:13px;height:13px;background:#7d3c97"></div>
<div class="a" style="left:1260px;top:153px;width:84px;height:28px;background:#dcdcdc"></div>
<svg class="a" style="left:1162px;top:100px" width="13" height="10" viewBox="0 0 13 10"><circle cx="6.5" cy="5" r="3.6" fill="none" stroke="#000" stroke-width="1"/><path d="M6.5 0V10M1 5H12" stroke="#000" stroke-width="1"/><circle cx="6.5" cy="5" r="1" fill="#000"/></svg>
<div class="a" style="left:1148px;top:166px;width:112px;height:1px;background:#000"></div>
<div class="a" style="left:1148px;top:167px;width:196px;height:14px;background:#dcdcdc"></div>
<div class="a" style="left:1148px;top:167px;width:14px;height:14px;background:#000"></div>
<div class="a" style="left:1149px;top:167px;width:12px;height:14px;background:#ededed"></div>
<div class="a" style="left:1161px;top:167px;width:15px;height:14px;background:#ffffff"></div>
<div class="a" style="left:1176px;top:167px;width:13px;height:14px;background:#000000"></div>
<div class="a" style="left:1189px;top:167px;width:1px;height:14px;background:#fff"></div>
<div class="a" style="left:1190px;top:167px;width:13px;height:14px;background:#3c3c3c"></div>
<div class="a" style="left:1203px;top:167px;width:1px;height:14px;background:#fff"></div>
<div class="a" style="left:1204px;top:167px;width:11px;height:14px;background:#e84a2a"></div>
<div class="a" style="left:1148px;top:166px;width:1px;height:15px;background:#000"></div>
<svg class="a" style="left:1150px;top:169px" width="12" height="10" viewBox="0 0 12 10"><path d="M0.5 9.5V2.5L1.5 1H5L6 2.5H11.5V9.5Z" fill="#d0d0d0" stroke="#777" stroke-width="1"/><path d="M0.5 9.5H11.5" stroke="#222" stroke-width="1.2"/></svg>
<div class="a" style="left:1214px;top:162px;width:20px;height:22px;border:3px solid #ee0d0d;border-radius:2px;background:#fff"></div>
<div class="a" style="left:1218px;top:167px;width:12px;height:12px;border:1px solid #000;background:#5e9343"></div>
<div class="a" style="left:1148px;top:180px;width:196px;height:2px;background:#000"></div>
<div class="a sb" style="left:1344px;top:99px;width:16px;height:82px"></div>
<div class="a arrU" style="left:1348px;top:106px"></div>
<div class="a" style="left:1346px;top:149px;width:13px;height:15px;border:1px solid #a8a8a8;border-radius:2px;background:linear-gradient(90deg,#f4f4f4,#d4d4d4)"></div>
<div class="a arrD" style="left:1348px;top:172px"></div>
<!-- icons row 1 -->
<svg class="a" style="left:1155px;top:183px" width="205" height="14" viewBox="0 0 205 14">
 <g fill="#e8e8e8" stroke="#333" stroke-width="1">
  <rect x="2.5" y="1.5" width="9" height="7"/><rect x="4.5" y="3.5" width="9" height="7"/><rect x="6.5" y="5.5" width="9" height="7" fill="#f4f4f4"/>
  <path d="M9 8H15M9 10.5H15M11.5 6V12.5" stroke="#555" stroke-width=".7"/>
 </g>
 <g stroke="#222" stroke-width="1">
  <rect x="41.5" y="1.5" width="7" height="6" fill="#aaa"/><rect x="44.5" y="4.5" width="7" height="6" fill="#666"/><rect x="48.5" y="7.5" width="5" height="5" fill="#333"/>
 </g>
 <rect x="74.5" y="2.5" width="13" height="10" fill="#e8e8e8" stroke="#333"/><path d="M77 7.5H85" stroke="#b03040" stroke-width="1.2"/><path d="M77 5H79M83 5H85M77 10H79M83 10H85" stroke="#333" stroke-width=".8"/>
 <path d="M102.5 12.5V4.5L104 2.5H108L109.5 4.5H115.5V12.5Z" fill="#f0f0f0" stroke="#333"/>
 <path d="M117 1V7M114 4H120" stroke="#111" stroke-width="2"/>
 <rect x="139.5" y="4.5" width="9" height="9" fill="#fff" stroke="#222"/><rect x="138.5" y="3.5" width="7" height="7" fill="#fff" stroke="#222"/><path d="M142 9L145 12" stroke="#222"/>
 <path d="M168.5 5.5H177.5L176.5 13.5H169.5Z M171 2.5H175V5" fill="#f0f0f0" stroke="#333"/><path d="M171.5 7V12M173 7V12M174.5 7V12" stroke="#555" stroke-width=".6"/>
 <path d="M20 13L23 10V13Z M60 13L63 10V13Z" fill="#222"/>
 <g fill="#9a9a9a"><circle cx="200" cy="12" r=".7"/><circle cx="197" cy="12" r=".7"/><circle cx="194" cy="12" r=".7"/><circle cx="200" cy="9" r=".7"/><circle cx="197" cy="9" r=".7"/><circle cx="200" cy="6" r=".7"/></g>
</svg>
<div class="a" style="left:1147px;top:199px;width:214px;height:3px;background:#3a3a3a"></div>

<!-- panel 2 tabs -->
<div class="a tabrow" style="left:1147px;top:202px;width:214px;height:17px">
 <div class="tab" style="left:0;width:41px">Pinsel</div>
 <div class="tab" style="left:41px;width:57px">Symbole</div>
 <div class="tab on" style="left:98px;width:63px">Grafikstile</div>
 <div class="pm" style="left:191px"></div>
</div>
<div class="a" style="left:1147px;top:219px;width:214px;height:155px;background:#d6d6d6"></div>
<div class="a" style="left:1148px;top:219px;width:196px;height:1px;background:#000"></div>
<div class="a" style="left:1148px;top:220px;width:193px;height:34px;background:#000"></div>
<div class="a" style="left:1149px;top:221px;width:31px;height:32px;background:#fff"></div>
<div class="a" style="left:1181px;top:221px;width:31px;height:32px;background:#fff"></div>
<div class="a" style="left:1213px;top:221px;width:31px;height:32px;background:#fff"></div>
<div class="a" style="left:1245px;top:221px;width:31px;height:32px;background:#fff"></div>
<div class="a" style="left:1277px;top:221px;width:31px;height:32px;background:#fff"></div>
<div class="a" style="left:1309px;top:221px;width:31px;height:32px;background:#fff"></div>
<div class="a" style="left:1153px;top:225px;width:23px;height:23px;border:1px solid #888;background:#fff"></div>
<div class="a" style="left:1154px;top:242px;width:8px;height:8px;border:1px solid #222;background:#fff"></div>
<div class="a" style="left:1158px;top:245px;width:7px;height:7px;background:#111"></div>
<div class="a" style="left:1155px;top:243px;width:6px;height:6px;background:#fff"></div>
<div class="a" style="left:1188px;top:227px;width:18px;height:19px;border-radius:2px;background:#fff;box-shadow:1px 2px 3px rgba(0,0,0,.25)"></div>
<div class="a" style="left:1217px;top:225px;width:23px;height:23px;border:1px solid #555;border-radius:4px;background:#fff"></div>
<div class="a" style="left:1217px;top:240px;width:8px;height:8px;border:1px solid #7a1030;background:#fff linear-gradient(135deg,transparent 38%,#b81a3a 38% 62%,transparent 62%)"></div>
<div class="a" style="left:1249px;top:230px;width:12px;height:13px;border:1px solid #777;background:#fff"></div>
<div class="a" style="left:1260px;top:230px;width:12px;height:13px;border:1px solid #777;background:#fff"></div>
<div class="a" style="left:1249px;top:240px;width:8px;height:8px;border:1px solid #7a1030;background:#fff linear-gradient(135deg,transparent 38%,#b81a3a 38% 62%,transparent 62%)"></div>
<div class="a" style="left:1283px;top:227px;width:19px;height:19px;background:repeating-conic-gradient(#1a1a8a 0 25%,#e0207a 0 40%,#ffd800 0 60%,#10a0a0 0 80%) 0 0/5px 5px"></div>
<div class="a" style="left:1313px;top:225px;width:23px;height:23px;border:1px solid #8a9478;background:linear-gradient(160deg,#b0b99c,#c5ccb2 60%,#a9b295)"></div>
<div class="a" style="left:1148px;top:253px;width:193px;height:2px;background:#000"></div>
<div class="a" style="left:1148px;top:355px;width:196px;height:2px;background:#000"></div>
<div class="a sb" style="left:1344px;top:220px;width:16px;height:136px"></div>
<div class="a arrU" style="left:1348px;top:228px"></div>
<div class="a arrD" style="left:1348px;top:345px"></div>
<svg class="a" style="left:1155px;top:358px" width="200" height="14" viewBox="0 0 200 14">
 <g fill="#f0f0f0" stroke="#333" stroke-width="1">
  <rect x="2.5" y="1.5" width="8" height="7"/><rect x="4.5" y="3.5" width="8" height="7"/><rect x="6.5" y="5.5" width="8" height="7"/>
  <rect x="139.5" y="4.5" width="9" height="9"/><rect x="138.5" y="3.5" width="7" height="7" fill="#fff"/>
 </g>
 <path d="M19 13L22 10V13Z" fill="#222"/>
 <g stroke="#777" fill="none"><path d="M101 7H123M104 4H120M104 10H120M106 2V12M118 2V12M112 1V13"/></g>
 <path d="M172.5 5.5H181.5L180.5 13.5H173.5Z M175 2.5H179V5" fill="#f0f0f0" stroke="#666"/>
 <g fill="#9a9a9a"><circle cx="196" cy="12" r=".7"/><circle cx="193" cy="12" r=".7"/><circle cx="190" cy="12" r=".7"/><circle cx="196" cy="9" r=".7"/><circle cx="193" cy="9" r=".7"/><circle cx="196" cy="6" r=".7"/></g>
</svg>
<div class="a" style="left:1147px;top:374px;width:214px;height:3px;background:#3a3a3a"></div>

<!-- panel 3 tabs -->
<div class="a tabrow" style="left:1147px;top:377px;width:214px;height:17px">
 <div class="tab on" style="left:0;width:47px">Ebenen</div>
 <div class="tab" style="left:47px;width:51px">Zeichen</div>
 <div class="tab" style="left:98px;width:46px">Absatz</div>
 <div class="pm" style="left:191px"></div>
</div>
<div class="a" style="left:1147px;top:394px;width:214px;height:119px;background:#d6d6d6"></div>
<div class="a" style="left:1148px;top:395px;width:196px;height:1px;background:#000"></div>
<div class="a" style="left:1148px;top:495px;width:196px;height:1px;background:#000"></div>
<div class="a" style="left:1193px;top:396px;width:1px;height:99px;background:#111"></div>
<div class="a" style="left:1194px;top:396px;width:150px;height:20px;background:#e2e2e2"></div>
<div class="a" style="left:1194px;top:416px;width:150px;height:60px;background:#fff"></div>
<div class="a" style="left:1194px;top:476px;width:150px;height:19px;background:#dcdcdc"></div>
<div class="a" style="left:1149px;top:396px;width:44px;height:20px;background:#d6d6d6;border-top:1px solid #ececec"></div>
<div class="a" style="left:1152px;top:398px;width:14px;height:16px;background:#dadada;border:1px solid #c4c4c4;border-right-color:#f4f4f4;border-bottom-color:#f4f4f4"></div>
<div class="a" style="left:1169px;top:398px;width:13px;height:16px;background:#dadada;border:1px solid #c4c4c4;border-right-color:#f4f4f4;border-bottom-color:#f4f4f4"></div>
<div class="a" style="left:1185px;top:399px;width:4px;height:14px;background:#1d8a4e"></div>
<svg class="a" style="left:1153px;top:402px" width="12" height="9" viewBox="0 0 12 9"><path d="M0.5 4.5C2.5 0.5 9.5 0.5 11.5 4.5C9.5 8.5 2.5 8.5 0.5 4.5Z" fill="#fff" stroke="#111" stroke-width="1.2"/><circle cx="6" cy="4.5" r="3" fill="#111"/><circle cx="5" cy="3.6" r=".9" fill="#fff"/></svg>
<div class="a" style="left:1149px;top:416px;width:44px;height:20px;background:#d6d6d6;border-top:1px solid #ececec"></div>
<div class="a" style="left:1152px;top:418px;width:14px;height:16px;background:#dadada;border:1px solid #c4c4c4;border-right-color:#f4f4f4;border-bottom-color:#f4f4f4"></div>
<div class="a" style="left:1169px;top:418px;width:13px;height:16px;background:#dadada;border:1px solid #c4c4c4;border-right-color:#f4f4f4;border-bottom-color:#f4f4f4"></div>
<div class="a" style="left:1185px;top:419px;width:4px;height:14px;background:#1d8a4e"></div>
<svg class="a" style="left:1153px;top:422px" width="12" height="9" viewBox="0 0 12 9"><path d="M0.5 4.5C2.5 0.5 9.5 0.5 11.5 4.5C9.5 8.5 2.5 8.5 0.5 4.5Z" fill="#fff" stroke="#111" stroke-width="1.2"/><circle cx="6" cy="4.5" r="3" fill="#111"/><circle cx="5" cy="3.6" r=".9" fill="#fff"/></svg>
<div class="a" style="left:1149px;top:436px;width:44px;height:20px;background:#d6d6d6;border-top:1px solid #ececec"></div>
<div class="a" style="left:1152px;top:438px;width:14px;height:16px;background:#dadada;border:1px solid #c4c4c4;border-right-color:#f4f4f4;border-bottom-color:#f4f4f4"></div>
<div class="a" style="left:1169px;top:438px;width:13px;height:16px;background:#dadada;border:1px solid #c4c4c4;border-right-color:#f4f4f4;border-bottom-color:#f4f4f4"></div>
<div class="a" style="left:1185px;top:439px;width:4px;height:14px;background:#1d8a4e"></div>
<svg class="a" style="left:1153px;top:442px" width="12" height="9" viewBox="0 0 12 9"><path d="M0.5 4.5C2.5 0.5 9.5 0.5 11.5 4.5C9.5 8.5 2.5 8.5 0.5 4.5Z" fill="#fff" stroke="#111" stroke-width="1.2"/><circle cx="6" cy="4.5" r="3" fill="#111"/><circle cx="5" cy="3.6" r=".9" fill="#fff"/></svg>
<svg class="a" style="left:1171px;top:441px" width="10" height="11" viewBox="0 0 10 11"><path d="M2.5 5V3.3A2.5 2.5 0 0 1 7.5 3.3V5" fill="none" stroke="#222" stroke-width="1.3"/><rect x="1" y="5" width="8" height="6" fill="#222"/></svg>
<div class="a" style="left:1149px;top:456px;width:44px;height:20px;background:#d6d6d6;border-top:1px solid #ececec"></div>
<div class="a" style="left:1152px;top:458px;width:14px;height:16px;background:#dadada;border:1px solid #c4c4c4;border-right-color:#f4f4f4;border-bottom-color:#f4f4f4"></div>
<div class="a" style="left:1169px;top:458px;width:13px;height:16px;background:#dadada;border:1px solid #c4c4c4;border-right-color:#f4f4f4;border-bottom-color:#f4f4f4"></div>
<div class="a" style="left:1185px;top:459px;width:4px;height:14px;background:#1d8a4e"></div>
<div class="a" style="left:1149px;top:476px;width:44px;height:20px;background:#d6d6d6;border-top:1px solid #ececec"></div>
<div class="a" style="left:1152px;top:478px;width:14px;height:16px;background:#dadada;border:1px solid #c4c4c4;border-right-color:#f4f4f4;border-bottom-color:#f4f4f4"></div>
<div class="a" style="left:1169px;top:478px;width:13px;height:16px;background:#dadada;border:1px solid #c4c4c4;border-right-color:#f4f4f4;border-bottom-color:#f4f4f4"></div>
<div class="a" style="left:1185px;top:479px;width:4px;height:14px;background:#f06a18"></div>
<svg class="a" style="left:1153px;top:482px" width="12" height="9" viewBox="0 0 12 9"><path d="M0.5 4.5C2.5 0.5 9.5 0.5 11.5 4.5C9.5 8.5 2.5 8.5 0.5 4.5Z" fill="#fff" stroke="#111" stroke-width="1.2"/><circle cx="6" cy="4.5" r="3" fill="#111"/><circle cx="5" cy="3.6" r=".9" fill="#fff"/></svg>
<svg class="a" style="left:1171px;top:481px" width="10" height="11" viewBox="0 0 10 11"><path d="M2.5 5V3.3A2.5 2.5 0 0 1 7.5 3.3V5" fill="none" stroke="#222" stroke-width="1.3"/><rect x="1" y="5" width="8" height="6" fill="#222"/></svg>
<div class="a" style="left:1209px;top:396px;width:135px;height:20px;background:#3c9afa"></div>
<svg class="a" style="left:1337px;top:396px" width="7" height="7"><path d="M0 0H7V7Z" fill="#111"/></svg>
<svg class="a" style="left:1196px;top:401px" width="12" height="8" viewBox="0 0 12 8"><path d="M1 1H11L6 7Z" fill="#f4f4f4" stroke="#888"/></svg>
<div class="a" style="left:1211px;top:398px;width:16px;height:16px;background:#fff;border:1px solid #111"></div>
<div class="a" style="left:1216px;top:402px;width:6px;height:9px;background:#5e9343"></div>
<div class="a" style="left:1232px;top:399px;font-size:10.3px;font-weight:bold;line-height:14px;color:#fff">Meine Ebene</div>
<div class="a" style="left:1319px;top:401px;width:10px;height:10px;border-radius:50%;border:1.3px solid #1d3a6a"></div>
<div class="a" style="left:1336px;top:404px;width:5px;height:5px;background:#1d8a4e"></div>
<div class="a" style="left:1225px;top:435px;width:119px;height:1px;background:#d8d8d8"></div>
<div class="a" style="left:1225px;top:455px;width:119px;height:1px;background:#d8d8d8"></div>
<div class="a" style="left:1226px;top:418px;width:16px;height:16px;background:#5e9343;border:1px solid #111;box-shadow:inset 0 0 0 1px #fff"></div>
<div class="a" style="left:1246px;top:419px;font-size:10.5px;line-height:14px;color:#111">&lt;Pfad&gt;</div>
<div class="a" style="left:1318px;top:420px;width:12px;height:12px;border-radius:50%;border:1.3px solid #333;box-shadow:inset 0 0 0 1.5px #fff,inset 0 0 0 2.5px #444"></div>
<div class="a" style="left:1334px;top:422px;width:8px;height:8px;background:#1d8a4e;border:1px solid #111"></div>
<div class="a" style="left:1226px;top:438px;width:16px;height:16px;background:#eeeadc;border:1px solid #111;box-shadow:inset 0 0 0 1px #fff"></div>
<div class="a" style="left:1246px;top:439px;font-size:10.5px;line-height:14px;color:#111">Hintergrund</div>
<div class="a" style="left:1319px;top:441px;width:10px;height:10px;border-radius:50%;background:radial-gradient(circle at 35% 35%,#ddd,#444 70%,#222)"></div>
<div class="a" style="left:1226px;top:458px;width:16px;height:16px;background:#e8601c;border:1px solid #111"></div>
<div class="a" style="left:1246px;top:459px;font-size:10.5px;line-height:14px;color:#111">&lt;Pfad&gt;</div>
<div class="a" style="left:1319px;top:461px;width:10px;height:10px;border-radius:50%;border:1px solid #333;background:#fff"></div>
<svg class="a" style="left:1197px;top:481px" width="8" height="11" viewBox="0 0 8 11"><path d="M1 1V10L7 5.5Z" fill="#f4f4f4" stroke="#888"/></svg>
<div class="a" style="left:1211px;top:478px;width:16px;height:16px;background:#fff;border:1px solid #111"></div>
<div class="a" style="left:1231px;top:479px;font-size:10.5px;line-height:14px;color:#111">Vorlage</div>
<div class="a" style="left:1319px;top:481px;width:10px;height:10px;border-radius:50%;border:1px solid #555;background:#e8e8e8"></div>
<div class="a sb" style="left:1344px;top:396px;width:16px;height:99px"></div>
<div class="a arrU" style="left:1348px;top:403px"></div>
<div class="a arrD" style="left:1348px;top:485px"></div>
<div class="a" style="left:1157px;top:496px;font-size:10.5px;line-height:14px;color:#111">2 Ebenen</div>
<svg class="a" style="left:1230px;top:497px" width="130" height="13" viewBox="0 0 130 13">
 <g fill="none" stroke="#222"><path d="M3.5 1.5H9.5V5" stroke-dasharray="1 1"/><circle cx="9" cy="8" r="4.2" fill="#fff"/><path d="M9 8L12 5" stroke-width="1.5"/><path d="M6 8A3 3 0 0 1 9 5V8Z" fill="#222"/></g>
 <path d="M29 5H35M33 3L35 5L33 7" fill="none" stroke="#111" stroke-width="1.3"/>
 <rect x="37.5" y="3.5" width="8" height="8" fill="#fff" stroke="#222"/><rect x="36" y="6" width="5" height="5" fill="#fff" stroke="#222"/>
 <rect x="66.5" y="3.5" width="9" height="9" fill="#fff" stroke="#222"/><rect x="65.5" y="2.5" width="7" height="7" fill="#fff" stroke="#555"/>
 <path d="M96.5 4.5H105.5L104.5 12.5H97.5Z M99 1.5H103V4" fill="#f0f0f0" stroke="#333"/>
 <g fill="#9a9a9a"><circle cx="126" cy="12" r=".7"/><circle cx="123" cy="12" r=".7"/><circle cx="120" cy="12" r=".7"/><circle cx="126" cy="9" r=".7"/><circle cx="123" cy="9" r=".7"/><circle cx="126" cy="6" r=".7"/></g>
</svg>
<div class="a" style="left:1147px;top:513px;width:214px;height:3px;background:#3a3a3a"></div>

<!-- panel 4 tabs -->
<div class="a tabrow" style="left:1147px;top:516px;width:214px;height:17px">
 <div class="tab on" style="left:0;width:58px">Aussehen</div>
 <div class="tab" style="left:58px;width:49px">Verlauf</div>
 <div class="tab" style="left:107px;width:67px">Transparenz</div>
 <div class="pm" style="left:191px"></div>
</div>
<div class="a" style="left:1147px;top:533px;width:214px;height:167px;background:#d6d6d6"></div>
<div class="a" style="left:1148px;top:534px;width:196px;height:1px;background:#000"></div>
<div class="a" style="left:1148px;top:535px;width:196px;height:23px;background:#d4d4d4"></div>
<div class="a" style="left:1151px;top:537px;width:20px;height:20px;background:#5e9343;border:1px solid #111;box-shadow:inset 0 0 0 1px #f0f0f0"></div>
<div class="a" style="left:1183px;top:540px;font-size:11px;font-weight:bold;line-height:14px;color:#111">Pfad</div>
<div class="a" style="left:1148px;top:557px;width:196px;height:2px;background:#111"></div>
<div class="a" style="left:1148px;top:559px;width:196px;height:96px;background:#d4d4d4"></div>
<div class="a" style="left:1171px;top:583px;width:173px;height:1px;background:#ececec"></div>
<div class="a" style="left:1171px;top:607px;width:173px;height:25px;background:#fff"></div>
<div class="a" style="left:1170px;top:558px;width:1px;height:97px;background:#111"></div>
<div class="a" style="left:1151px;top:560px;width:14px;height:22px;background:#dadada;border:1px solid #c4c4c4;border-right-color:#f4f4f4;border-bottom-color:#f4f4f4"></div>
<div class="a" style="left:1151px;top:585px;width:14px;height:22px;background:#dadada;border:1px solid #c4c4c4;border-right-color:#f4f4f4;border-bottom-color:#f4f4f4"></div>
<div class="a" style="left:1151px;top:609px;width:14px;height:22px;background:#dadada;border:1px solid #c4c4c4;border-right-color:#f4f4f4;border-bottom-color:#f4f4f4"></div>
<div class="a" style="left:1151px;top:633px;width:14px;height:22px;background:#dadada;border:1px solid #c4c4c4;border-right-color:#f4f4f4;border-bottom-color:#f4f4f4"></div>
<svg class="a" style="left:1152px;top:566px" width="12" height="9" viewBox="0 0 12 9"><path d="M0.5 4.5C2.5 0.5 9.5 0.5 11.5 4.5C9.5 8.5 2.5 8.5 0.5 4.5Z" fill="#fff" stroke="#111" stroke-width="1.2"/><circle cx="6" cy="4.5" r="3" fill="#111"/><circle cx="5" cy="3.6" r=".9" fill="#fff"/></svg>
<svg class="a" style="left:1152px;top:591px" width="12" height="9" viewBox="0 0 12 9"><path d="M0.5 4.5C2.5 0.5 9.5 0.5 11.5 4.5C9.5 8.5 2.5 8.5 0.5 4.5Z" fill="#fff" stroke="#111" stroke-width="1.2"/><circle cx="6" cy="4.5" r="3" fill="#111"/><circle cx="5" cy="3.6" r=".9" fill="#fff"/></svg>
<svg class="a" style="left:1152px;top:615px" width="12" height="8" viewBox="0 0 12 8"><path d="M0.5 4C2.5 0.8 9.5 0.8 11.5 4C9.5 7.2 2.5 7.2 0.5 4Z" fill="#e4e4e4" stroke="#888" stroke-width="1.1"/><circle cx="6" cy="4" r="2.3" fill="#888"/></svg>
<svg class="a" style="left:1152px;top:639px" width="12" height="8" viewBox="0 0 12 8"><path d="M0.5 4C2.5 0.8 9.5 0.8 11.5 4C9.5 7.2 2.5 7.2 0.5 4Z" fill="#e4e4e4" stroke="#888" stroke-width="1.1"/><circle cx="6" cy="4" r="2.3" fill="#888"/></svg>
<svg class="a" style="left:1173px;top:566px" width="8" height="12" viewBox="0 0 8 12"><path d="M1 1V11L7 6Z" fill="#e8e8e8" stroke="#111" stroke-width="1.3"/></svg>
<svg class="a" style="left:1171px;top:590px" width="12" height="8" viewBox="0 0 12 8"><path d="M1 1H11L6 7Z" fill="#e8e8e8" stroke="#111" stroke-width="1.3"/></svg>
<div class="a blue" style="left:1184px;top:565px;font-size:10.5px;line-height:13px">Kontur:</div>
<div class="a" style="left:1229px;top:562px;width:18px;height:18px;border:1px solid #111;background:#fff;box-shadow:inset 0 0 0 1px #e8e8e8"></div>
<svg class="a" style="left:1231px;top:564px" width="14" height="14"><path d="M1 13L13 1" stroke="#c0102a" stroke-width="2"/><rect x=".5" y=".5" width="13" height="13" fill="none" stroke="#111"/></svg>
<div class="a" style="left:1184px;top:589px;font-size:10.5px;line-height:13px;color:#111">Fl&auml;che:</div>
<div class="a" style="left:1229px;top:587px;width:18px;height:18px;border:1px solid #111;background:#5e9343;box-shadow:inset 0 0 0 1px #e8e8e8,inset 0 0 0 2px #111"></div>
<div class="a blue" style="left:1194px;top:613px;font-size:10.5px;line-height:13px">Deckkraft:</div>
<div class="a" style="left:1248px;top:614px;font-size:10.5px;line-height:13px;color:#111">Standard</div>
<div class="a blue" style="left:1184px;top:637px;font-size:10.5px;line-height:13px">Deckkraft:</div>
<div class="a" style="left:1238px;top:638px;font-size:10.5px;line-height:13px;color:#111">Standard</div>
<div class="a" style="left:1148px;top:654px;width:196px;height:1px;background:#111"></div>
<div class="a" style="left:1148px;top:682px;width:196px;height:1px;background:#111"></div>
<div class="a sb" style="left:1344px;top:535px;width:16px;height:148px"></div>
<div class="a arrU" style="left:1348px;top:544px"></div>
<div class="a arrD" style="left:1348px;top:672px"></div>
<svg class="a" style="left:1155px;top:684px" width="205" height="14" viewBox="0 0 205 14">
 <rect x="4" y="2" width="11" height="11" fill="#333"/><rect x="7" y="5" width="5" height="5" fill="#ccc"/>
 <rect x="38.5" y="2.5" width="10" height="10" fill="#fff" stroke="#444"/>
 <text x="71" y="12" font-family="Liberation Serif" font-style="italic" font-weight="bold" font-size="13" fill="#222">fx</text><path d="M85 13L88 10V13Z" fill="#222"/>
 <circle cx="109" cy="7.5" r="4.5" fill="#fff" stroke="#333" stroke-width="1.3"/><path d="M106 4.5L112 10.5" stroke="#333" stroke-width="1.3"/>
 <rect x="142.5" y="4.5" width="9" height="9" fill="#fff" stroke="#777"/><rect x="141.5" y="3.5" width="7" height="7" fill="#fff" stroke="#999"/>
 <path d="M173.5 5.5H182.5L181.5 13.5H174.5Z M176 2.5H180V5" fill="#f0f0f0" stroke="#777"/>
</svg>
<div class="a" style="left:1147px;top:700px;width:214px;height:3px;background:#3a3a3a"></div>
<div class="a tabrow" style="left:1147px;top:703px;width:214px;height:17px">
 <div class="tab on" style="left:0;width:73px">&#8661; Ausrichten</div>
 <div class="tab" style="left:73px;width:65px">Pathfinder</div>
 <div class="pm" style="left:191px"></div>
</div>
<div class="a" style="left:1147px;top:720px;width:214px;height:1px;background:#555"></div>
<div class="a" style="left:1147px;top:721px;width:214px;height:4px;background:#d8d8d8"></div>

</body></html>
